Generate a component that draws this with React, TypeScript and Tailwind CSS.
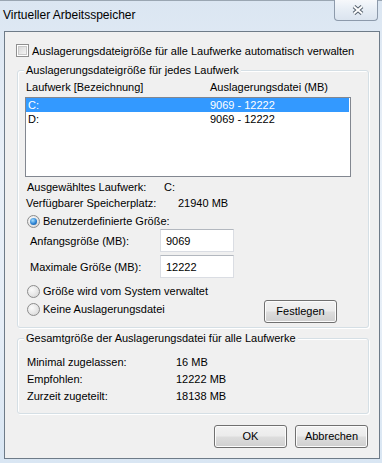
import React from "react";

function Radio({ checked }: { checked?: boolean }) {
  return (
    <span className="flex h-[13px] w-[13px] shrink-0 items-center justify-center rounded-full border border-[#8c8c8c] bg-[radial-gradient(circle_at_35%_35%,#fbfbfb_0%,#e6e6e6_55%,#d0d0d0_100%)]">
      {checked && (
        <span className="h-[7px] w-[7px] rounded-full bg-[radial-gradient(circle_at_40%_35%,#a6e0ff_0%,#2c82d3_55%,#0e4c8c_100%)]" />
      )}
    </span>
  );
}

function Btn({ children, className = "" }: { children: React.ReactNode; className?: string }) {
  return (
    <div
      className={
        "flex h-[23px] w-[73px] shrink-0 items-center justify-center rounded-[3px] border border-[#707070] bg-[linear-gradient(180deg,#f2f2f2_0%,#ebebeb_48%,#dddddd_52%,#cfcfcf_100%)] shadow-[inset_0_0_0_1px_#fcfcfc] " +
        className
      }
    >
      {children}
    </div>
  );
}

function Group({
  legend,
  className,
  children,
}: {
  legend: string;
  className: string;
  children: React.ReactNode;
}) {
  return (
    <div
      className={
        "relative ml-[12px] w-[352px] rounded-[3px] border border-[#d5dfe5] shadow-[inset_1px_1px_0_#ffffff,1px_1px_0_#ffffff] " +
        className
      }
    >
      <span className="absolute left-[6px] top-[-8px] bg-[#f0f0f0] px-[2px] leading-[14px]">{legend}</span>
      {children}
    </div>
  );
}

export default function App() {
  return (
    <div className="flex h-[463px] w-[382px] flex-col overflow-hidden bg-[linear-gradient(180deg,#dbe6f2_0%,#e9f0f8_35%,#e6eef7_70%,#d9e6f3_100%)] font-['Liberation_Sans',Arial,sans-serif] text-[11px] text-black">
      {/* title bar */}
      <div className="flex h-[31px] shrink-0 items-start justify-between border-t border-t-[#9aa6b2]">
        <span className="pl-[3px] pt-[6px] text-[12px] leading-[16px] text-[#000]">Virtueller Arbeitsspeicher</span>
        <div className="mr-[4px] mt-[-1px] flex h-[21px] w-[44px] items-center justify-center rounded-b-[4px] border border-t-0 border-[#8d9aab] bg-[linear-gradient(180deg,#f6f8fb_0%,#e6edf5_50%,#dbe4ef_100%)] pl-[3px]">
          <svg width="12" height="10" viewBox="0 0 12 10">
            <path d="M2 1.5 L10 8.5 M10 1.5 L2 8.5" stroke="#55606d" strokeWidth="4" />
            <path d="M2 1.5 L10 8.5 M10 1.5 L2 8.5" stroke="#ffffff" strokeWidth="2" />
          </svg>
        </div>
      </div>

      {/* client area */}
      <div className="ml-[4px] flex h-[428px] w-[376px] shrink-0 flex-col border border-[#6e7b88] bg-[#f0f0f0]">
        {/* checkbox */}
        <div className="mt-[12px] flex h-[13px] items-center gap-[3px] pl-[11px]">
          <span className="flex h-[13px] w-[13px] shrink-0 items-center justify-center border border-[#8f8f8f] bg-white">
            <span className="h-[9px] w-[9px] border border-[#c9c9c9] bg-[linear-gradient(135deg,#d9d9d9_0%,#f4f4f4_100%)]" />
          </span>
          <span className="leading-[14px]">Auslagerungsdateigröße für alle Laufwerke automatisch verwalten</span>
        </div>

        {/* group 1 */}
        <Group legend="Auslagerungsdateigröße für jedes Laufwerk" className="mt-[13px] h-[258px]">
          <div className="flex flex-col pl-[7px]">
            <div className="mt-[9px] flex h-[14px] items-center pl-[1px] leading-[14px]">
              <span className="w-[184px]">Laufwerk [Bezeichnung]</span>
              <span>Auslagerungsdatei (MB)</span>
            </div>
            <div className="mt-[3px] flex h-[80px] w-[326px] flex-col border border-[#828790] bg-white">
              <div className="mr-[1px] flex h-[14px] items-center bg-[#3399ff] pl-[2px] leading-[14px] text-white">
                <span className="w-[182px]">C:</span>
                <span>9069 - 12222</span>
              </div>
              <div className="flex h-[14px] items-center pl-[2px] leading-[14px]">
                <span className="w-[182px]">D:</span>
                <span>9069 - 12222</span>
              </div>
            </div>
            <div className="mt-[2px] flex h-[16px] items-center pl-[2px] leading-[14px]">
              <span className="w-[137px]">Ausgewähltes Laufwerk:</span>
              <span>C:</span>
            </div>
            <div className="flex h-[16px] items-center pl-[1px] leading-[14px]">
              <span className="w-[152px]">Verfügbarer Speicherplatz:</span>
              <span>21940 MB</span>
            </div>
            <div className="mt-[3px] flex h-[14px] items-center gap-[3px] pl-[2px] leading-[14px]">
              <Radio checked />
              <span>Benutzerdefinierte Größe:</span>
            </div>
            <div className="mt-[1px] flex h-[23px] items-center pl-[5px] leading-[14px]">
              <span className="w-[130px]">Anfangsgröße (MB):</span>
              <div className="flex h-[23px] w-[74px] items-center border border-[#dadde3] border-t-[#b3b8bf] bg-white pl-[5px]">
                9069
              </div>
            </div>
            <div className="mt-[3px] flex h-[23px] items-center pl-[5px] leading-[14px]">
              <span className="w-[130px]">Maximale Größe (MB):</span>
              <div className="flex h-[23px] w-[74px] items-center border border-[#dadde3] border-t-[#b3b8bf] bg-white pl-[5px]">
                12222
              </div>
            </div>
            <div className="mt-[6px] flex h-[14px] items-center gap-[3px] pl-[2px] leading-[14px]">
              <Radio />
              <span>Größe wird vom System verwaltet</span>
            </div>
            <div className="mt-[2px] flex items-start">
              <div className="mt-[2px] flex h-[14px] items-center gap-[3px] pl-[2px] leading-[14px]">
                <Radio />
                <span>Keine Auslagerungsdatei</span>
              </div>
              <Btn className="ml-auto mr-[31px]">Festlegen</Btn>
            </div>
          </div>
        </Group>

        {/* group 2 */}
        <Group legend="Gesamtgröße der Auslagerungsdatei für alle Laufwerke" className="mt-[10px] h-[76px]">
          <div className="mt-[14px] flex flex-col pl-[9px] leading-[14px]">
            <div className="flex h-[17px] items-center">
              <span className="w-[149px]">Minimal zugelassen:</span>
              <span>16 MB</span>
            </div>
            <div className="flex h-[17px] items-center">
              <span className="w-[149px]">Empfohlen:</span>
              <span>12222 MB</span>
            </div>
            <div className="flex h-[17px] items-center">
              <span className="w-[149px]">Zurzeit zugeteilt:</span>
              <span>18138 MB</span>
            </div>
          </div>
        </Group>

        {/* buttons */}
        <div className="mr-[11px] mt-[11px] flex justify-end gap-[8px]">
          <Btn>OK</Btn>
          <Btn>Abbrechen</Btn>
        </div>
      </div>
    </div>
  );
}
